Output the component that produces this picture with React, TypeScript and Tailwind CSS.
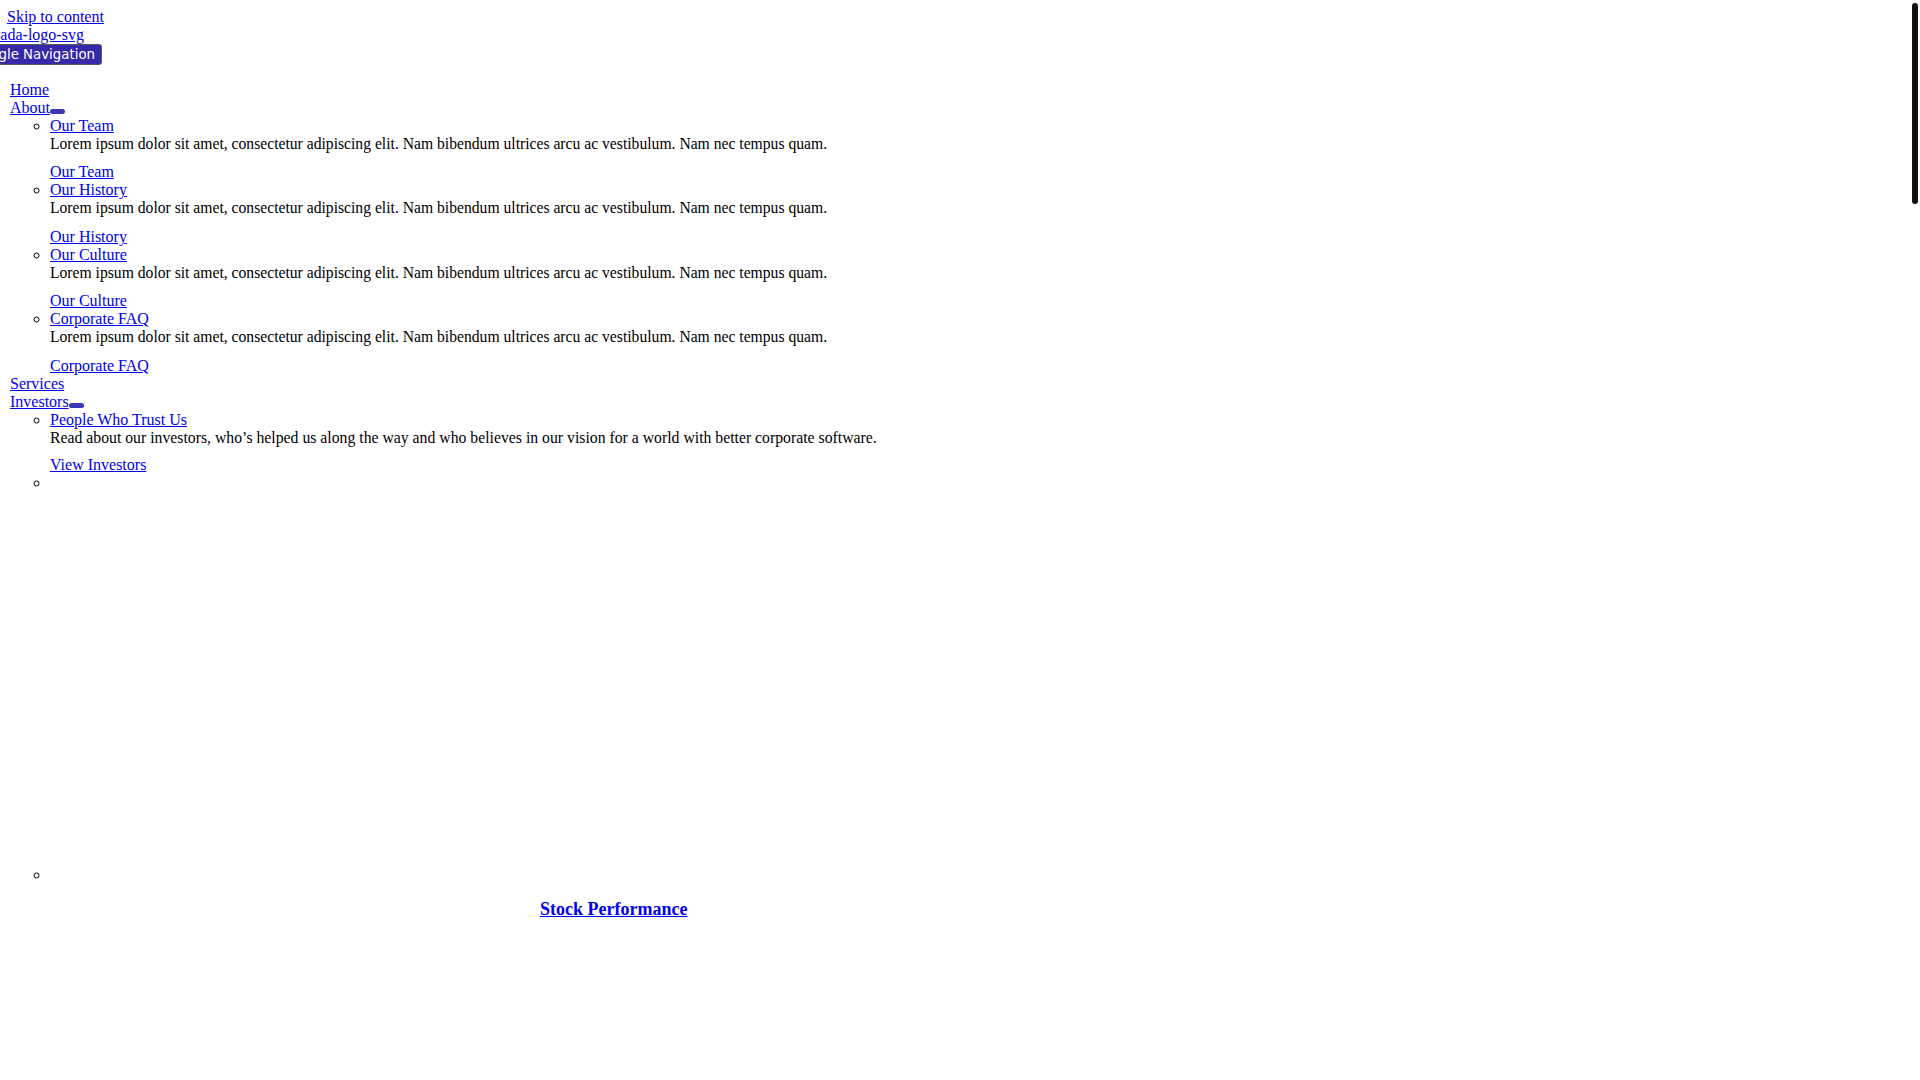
import React from "react";

const lorem =
  "Lorem ipsum dolor sit amet, consectetur adipiscing elit. Nam bibendum ultrices arcu ac vestibulum. Nam nec tempus quam.";

const aboutItems = ["Our Team", "Our History", "Our Culture", "Corporate FAQ"];

function Link({ children, className = "" }: { children: React.ReactNode; className?: string }) {
  return (
    <a href="#" className={"text-[#0000ee] underline " + className}>
      {children}
    </a>
  );
}

function Pill() {
  return <span className="inline-block w-[15px] h-[5px] rounded-[3px] bg-[#3b36b3] align-[-1px]" />;
}

export default function App() {
  return (
    <div className="min-h-screen bg-white text-black font-['Liberation_Serif',serif] text-[16px] leading-[normal] pt-[8px] overflow-x-hidden">
      <div className="pl-[7px]">
        <Link>Skip to content</Link>
      </div>
      <div>
        <Link className="ml-[-18px]">Avada-logo-svg</Link>
      </div>
      <button className="block ml-[-31px] px-[6px] py-[2px] border border-[#5a5a5a] rounded-[3px] bg-[#3529aa] text-white font-['DejaVu_Sans',sans-serif] text-[13.33px] leading-[normal]">
        Toggle Navigation
      </button>
      <nav>
        <ul className="my-4 pl-[10px] list-none">
          <li>
            <Link>Home</Link>
          </li>
          <li>
            <Link>About</Link>
            <Pill />
            <ul className="pl-[40px] list-[circle]">
              {aboutItems.map((t) => (
                <li key={t}>
                  <Link>{t}</Link>
                  <p className="mb-[10px] text-[15.65px] leading-[18.4px]">{lorem}</p>
                  <Link>{t}</Link>
                </li>
              ))}
            </ul>
          </li>
          <li>
            <Link>Services</Link>
          </li>
          <li>
            <Link>Investors</Link>
            <Pill />
            <ul className="pl-[40px] list-[circle]">
              <li>
                <Link>People Who Trust Us</Link>
                <p className="mb-[9px] text-[15.75px] leading-[18.4px]">
                  Read about our investors, who’s helped us along the way and who believes in our vision for a world with better corporate software.
                </p>
                <Link>View Investors</Link>
              </li>
              <li className="h-[392px]">{"\u00a0"}</li>
              <li>
                {"\u00a0"}
                <div className="mt-[15px] pl-[490px]">
                  <Link className="font-bold text-[18px]">Stock Performance</Link>
                </div>
              </li>
            </ul>
          </li>
        </ul>
      </nav>
      <div className="fixed top-[3px] right-[2px] w-[6px] h-[201px] rounded-full bg-[#111111]" />
    </div>
  );
}
